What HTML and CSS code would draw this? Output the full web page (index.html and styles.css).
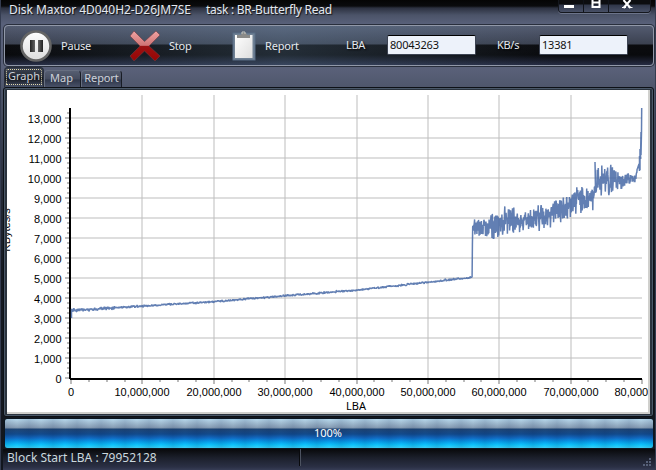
FILE: index.html
```html
<!DOCTYPE html>
<html lang="en">
<head>
  <meta charset="UTF-8">
  <title>Disk Maxtor 4D040H2-D26JM7SE</title>
  <link rel="stylesheet" href="styles.css">
</head>
<body>
  <div class="window">
    <header class="titlebar">
      <h1 class="title"><span class="disk">Disk Maxtor 4D040H2-D26JM7SE</span><span class="task">task : BR-Butterfly Read</span></h1>
      <div class="controls">
        <button class="control minimize"><svg width="24" height="12"><rect x="5" y="5" width="10" height="3" fill="#fff"/></svg></button>
        <button class="control maximize"><svg width="24" height="12"><path d="M8.500 0v7h7V0M8 2.500h8" fill="none" stroke="#fff" stroke-width="2"/></svg></button>
        <button class="control close"><svg width="41" height="12"><path d="M14.500 0l7 8M21.500 0l-7 8" stroke="#fff" stroke-width="2"/><path d="M13 7.500h4M19.500 7.500h4" stroke="#fff"/></svg></button>
      </div>
    </header>

    <div class="toolbar">
      <button class="tool pause">
        <svg width="32" height="32" viewBox="0 0 32 32">
          <defs>
            <linearGradient id="disc" x1="0" y1="0" x2="0" y2="1"><stop offset="0" stop-color="#fff"/><stop offset="1" stop-color="#dcdcdc"/></linearGradient>
            <linearGradient id="bars"><stop offset="0" stop-color="#222"/><stop offset=".5" stop-color="#777"/><stop offset="1" stop-color="#222"/></linearGradient>
          </defs>
          <circle cx="16" cy="16" r="14.500" fill="url(#disc)" stroke="#656565" stroke-width="2.600"/>
          <path d="M10 10h5v12h-5zM18 10h5v12h-5z" fill="url(#bars)"/>
        </svg>
        <span>Pause</span>
      </button>
      <button class="tool stop">
        <svg width="32" height="32" viewBox="0 0 32 32">
          <defs>
            <linearGradient id="cross" x1="0" y1="0" x2="0" y2="1">
              <stop offset="0" stop-color="#efa3a3"/><stop offset=".48" stop-color="#cf7474"/>
              <stop offset=".5" stop-color="#9c1212"/><stop offset="1" stop-color="#970505"/>
            </linearGradient>
          </defs>
          <path d="M5 1 15.500 11.500 27 1l4 4-11 11 11 10-5 5-10.500-10L5 31l-4-5 10-10L1 6z" fill="url(#cross)" stroke="#6c3a42" stroke-width=".6"/>
        </svg>
        <span>Stop</span>
      </button>
      <button class="tool report">
        <svg width="24" height="30" viewBox="0 0 24 30">
          <defs><linearGradient id="paper" x1="0" y1="0" x2="1" y2="1"><stop offset="0" stop-color="#fff"/><stop offset="1" stop-color="#dedede"/></linearGradient></defs>
          <rect x="1" y="2" width="22" height="27" fill="#718295" stroke="#596c85"/>
          <rect x="3" y="4" width="17.500" height="23" fill="url(#paper)"/>
          <path d="M5 7V4h4l1-2h4l1 2h3v3z" fill="#8b8b89"/>
          <path d="M10 3V1h3v2" fill="none" stroke="#c8c8c0"/>
        </svg>
        <span>Report</span>
      </button>
      <label class="field lba"><span>LBA</span><input type="text" value="80043263"></label>
      <label class="field speed"><span>KB/s</span><input type="text" value="13381"></label>
    </div>

    <nav class="tabs">
      <a class="tab active">Graph</a>
      <a class="tab map">Map</a>
      <a class="tab rep">Report</a>
    </nav>

    <main class="panel">
      <svg id="chart" class="chart" width="641" height="322" viewBox="7 90 641 322"></svg>
    </main>

    <div class="progress"><span>100%</span></div>

    <footer class="status">
      <div class="cell">Block Start LBA : 79952128</div>
      <svg class="grip" width="9" height="9" viewBox="0 0 9 9"><path d="M6 0h2v2H6zM3 3h2v2H3zM6 3h2v2H6zM0 6h2v2H0zM3 6h2v2H3zM6 6h2v2H6z" fill="#566078"/></svg>
    </footer>
  </div>
  <script src="chart.js"></script>
</body>
</html>
```
FILE: styles.css
```css
* {
  box-sizing: border-box;
}

body {
  margin: 0;
  width: 656px;
  height: 470px;
  overflow: hidden;
  font-family: "Noto Sans", "Open Sans", sans-serif;
  font-size: 11px;
  color: #e4e8ee;
}

.window {
  display: flex;
  flex-direction: column;
  height: 470px;
  padding: 0 4px 0 3px;
  border-left: 1px solid #343c50;
  border-right: 1px solid #343c50;
  background: linear-gradient(#050505 0, #0a0b0d 6px, #2c3140 8px, #4b5368 15px, #59617a 24px, #596078 70px, #4d556a 90px, #242a38 190px, #151a22 270px, #12161e 100%);
}

/* title bar */
.titlebar {
  display: flex;
  justify-content: space-between;
  flex: none;
  height: 25px;
}

.title {
  display: flex;
  margin: 0;
  padding-left: 5px;
  font-size: 12px;
  font-weight: normal;
  line-height: 19px;
  letter-spacing: -.05px;
  white-space: nowrap;
  text-shadow: 1px 1px 1px #111;
}

.disk {
  width: 197px;
}

.task {
  letter-spacing: -.27px;
}

.controls {
  display: flex;
  height: 13px;
  border: 1px solid #14171d;
  border-top: 0;
  border-radius: 0 0 4px 4px;
  box-shadow: 0 1px 0 #6c748a;
  overflow: hidden;
}

.control {
  height: 12px;
  padding: 0;
  border: 0;
  border-right: 1px solid #10131a;
  background: linear-gradient(#0c0d10 0, #0c0d10 4px, #30374a 5px, #485066 100%);
}

.control svg {
  display: block;
}

.control.close {
  border-right: 0;
}

/* toolbar */
.toolbar {
  display: flex;
  align-items: center;
  flex: none;
  height: 41px;
  margin-right: -3px;
  border: 1px solid #9198a8;
  border-radius: 4px;
  box-shadow: 0 0 0 1px #292f3d;
  background:
    linear-gradient(90deg, rgba(110, 145, 175, 0) 0, rgba(110, 145, 175, .26) 43%, rgba(110, 145, 175, 0) 85%),
    linear-gradient(#535b70 0, #3b4150 18px, #0b0c0f 19px, #090a0d 29px, #262c43 100%);
}

.tool {
  display: flex;
  align-items: center;
  padding: 0;
  border: 0;
  background: none;
  color: inherit;
  font: inherit;
  text-align: left;
}

.tool.pause {
  width: 109px;
  padding-left: 15px;
  gap: 9px;
}

.tool.stop {
  width: 103px;
  padding-left: 15px;
  gap: 8px;
}

.tool.report {
  width: 129px;
  padding-left: 15px;
  gap: 9px;
}

.tool span {
  letter-spacing: -.2px;
}

.field {
  display: flex;
  align-items: center;
  padding-bottom: 2px;
  letter-spacing: -.3px;
  text-shadow: 1px 1px 2px #000;
}

.field.lba span {
  width: 41px;
}

.field.speed span {
  width: 42px;
}

.field.speed {
  margin-left: 21px;
}

.field input {
  width: 89px;
  height: 20px;
  padding: 0 2px;
  border: 1px solid #3c4352;
  border-top-color: #000;
  border-radius: 2px;
  background: #edf2fa;
  color: #111;
  font: inherit;
  letter-spacing: -.2px;
}

/* tabs */
.tabs {
  display: flex;
  align-items: flex-end;
  flex: none;
  height: 20px;
  margin-top: 1px;
}

.tab {
  height: 17px;
  border: 1px solid #666e80;
  border-right-color: #181c25;
  border-bottom: 0;
  border-radius: 4px 4px 0 0;
  background: linear-gradient(#565e71 0, #454c5e 8px, #30384b 9px, #485067 100%);
  line-height: 14px;
  text-align: center;
  color: #cdd1d9;
}

.tab.active {
  width: 40px;
  height: 20px;
  border-color: #292f3b;
  background: linear-gradient(#3c4352 0, #252a35 9px, #101217 10px, #475067 100%);
  outline: 1px dotted #e0d7ad;
  outline-offset: -3px;
  line-height: 16px;
}

.tab.map {
  width: 37px;
  padding-right: 2px;
}

.tab.rep {
  width: 41px;
  letter-spacing: -.1px;
}

/* graph panel */
.panel {
  flex: none;
  height: 330px;
  margin: 0 -3px 0 -1px;
  padding: 2px 0 0 2px;
  border: 1px solid #0d1117;
  border-radius: 3px;
  background: #2a333e;
  box-shadow: inset 0 0 0 1px #4a5868;
}

.chart {
  display: block;
  box-sizing: content-box;
  margin-left: 1px;
  border-right: 2px solid #d0d0cd;
  border-bottom: 2px solid #d0d0cd;
  background: #fff;
  font-family: "Liberation Sans", Arial, sans-serif;
  font-size: 11px;
}

.grid {
  stroke: #bebebe;
  stroke-opacity: .5;
  stroke-width: 2;
}

.tick {
  stroke: #bbb;
  stroke-width: 2;
}

.axis {
  fill: none;
  stroke: #000;
  stroke-width: 2;
}

.axis-name {
  font-family: "Noto Sans", sans-serif;
}

.series {
  fill: none;
  stroke: #4668a6;
  stroke-opacity: .85;
  stroke-width: 1.5;
  stroke-linejoin: bevel;
}

/* progress and status */
.progress {
  display: flex;
  align-items: center;
  justify-content: center;
  flex: none;
  height: 31px;
  margin: 1px -3px 0 0;
  padding: 0 2px 2px 0;
  border: 1px solid #0b1722;
  border-radius: 3px;
  background:
    repeating-linear-gradient(90deg, rgba(0, 20, 70, .12) 0, rgba(0, 20, 70, 0) 12px, rgba(0, 20, 70, .12) 24px),
    linear-gradient(#b5d8ed 0, #a8c4d8 3px, #8ba2b9 8px, #8096ad 9px, #204776 10px, #124a8c 15px, #126bc4 19px, #0796e6 22px, #0dc7ff 26px, #3fd0f4 100%);
  color: #fff;
}

.status {
  display: flex;
  justify-content: space-between;
  align-items: flex-end;
  flex: none;
  height: 22px;
  margin: 0 -4px 0 -1px;
  background: linear-gradient(#08090b 0, #1c202c 9px, #2b3045 18px, #3b415b 100%);
}

.cell {
  width: 298px;
  height: 17px;
  margin-bottom: 5px;
  padding-left: 4px;
  border-right: 1px solid #4c5260;
  box-shadow: inset -1px 0 0 #090a0d;
  color: #cbd8de;
  font-size: 12px;
  line-height: 17px;
}

.grip {
  margin: 0 3px 4px 0;
}
```
FILE: chart.js
```js
const svg = document.getElementById('chart');

// plot origin and scale
const LEFT = 71;
const BOTTOM = 378;
const RIGHT = 642;
const px = lba => LEFT + lba * 7.1375;   // lba in millions
const py = kb => BOTTOM - kb / 50;

function add(name, attrs, text) {
  const el = document.createElementNS('http://www.w3.org/2000/svg', name);
  for (const key in attrs) el.setAttribute(key, attrs[key]);
  if (text) el.textContent = text;
  svg.appendChild(el);
}

function line(cls, x1, y1, x2, y2) {
  add('path', { class: cls, d: `M${x1} ${y1}L${x2} ${y2}` });
}

// horizontal grid and the value scale
for (let kb = 0; kb <= 13000; kb += 1000) {
  const y = py(kb);
  if (kb) line('grid', LEFT, y, RIGHT, y);
  line('tick', 65, y, 70, y);
  add('text', { x: 61.5, y: y + 4.5, 'text-anchor': 'end' }, kb.toLocaleString('en-US'));
}
for (let kb = 250; kb <= 13250; kb += 250) {
  if (kb % 1000) line('tick', 67, py(kb), 70, py(kb));
}

// vertical grid and the address scale
for (let i = 0; i <= 32; i++) {
  const x = Math.round(px(i * 2.5));
  const major = i % 4 === 0;
  if (major && i && i < 32) line('grid', x, 95, x, BOTTOM);
  line('tick', x, 379, x, major ? 384 : 382);
  if (major) {
    add('text', { x: x, y: 396, 'text-anchor': 'middle' }, (i * 2500000).toLocaleString('en-US'));
  }
}

line('axis', 70, 108, 70, 379);
line('axis', 70, 379, RIGHT, 379);
add('text', { class: 'axis-name', x: 356, y: 410, 'text-anchor': 'middle' }, 'LBA');
add('text', { transform: 'translate(10 230) rotate(-90)', 'text-anchor': 'middle' }, 'KBytes/s');

// [lba in millions, average KB/s, spread]
const profile = [
  [0.3, 3380, 100], [5, 3480, 100], [10, 3600, 75], [20, 3820, 65],
  [30, 4110, 75], [40, 4390, 65], [50, 4790, 65], [56.2, 5030, 75],
  [56.25, 7600, 650], [59, 7650, 800], [61, 7900, 850], [63.5, 7900, 680],
  [66, 8000, 800], [68, 8350, 850], [70, 8700, 800], [71.5, 9000, 780],
  [73.4, 9000, 700], [73.5, 9900, 880], [77, 9920, 850],
  [77.4, 9880, 450], [79.1, 9950, 280], [79.4, 10350, 300]
];

let seed = 41;
function random() {
  seed = (seed * 16807) % 2147483647;
  return seed / 2147483647;
}

function average(lba) {
  let i = 1;
  while (i < profile.length - 1 && profile[i][0] < lba) i++;
  const a = profile[i - 1];
  const b = profile[i];
  const t = (lba - a[0]) / (b[0] - a[0]);
  return [a[1] + (b[1] - a[1]) * t, a[2] + (b[2] - a[2]) * t];
}

const points = [[71.5, py(3000)], [71.5, py(3450)]];
for (let lba = 0.3; lba < 79.4; lba += 0.045) {
  const [mean, spread] = average(lba);
  const swing = (random() + random() - 1) * spread;
  points.push([px(lba), py(mean + swing)]);
  if (lba > 73.46 && lba < 73.51) points.push([595, py(10800)]);
}
points.push([639, 164], [639.5, 171], [639.5, 156], [640, 170], [640, 149],
  [640.5, 159], [641, 132], [641, 155], [641.5, 132], [641.7, 108]);

add('polyline', { class: 'series', points: points.map(p => p[0].toFixed(1) + ',' + p[1].toFixed(1)).join(' ') });
```
